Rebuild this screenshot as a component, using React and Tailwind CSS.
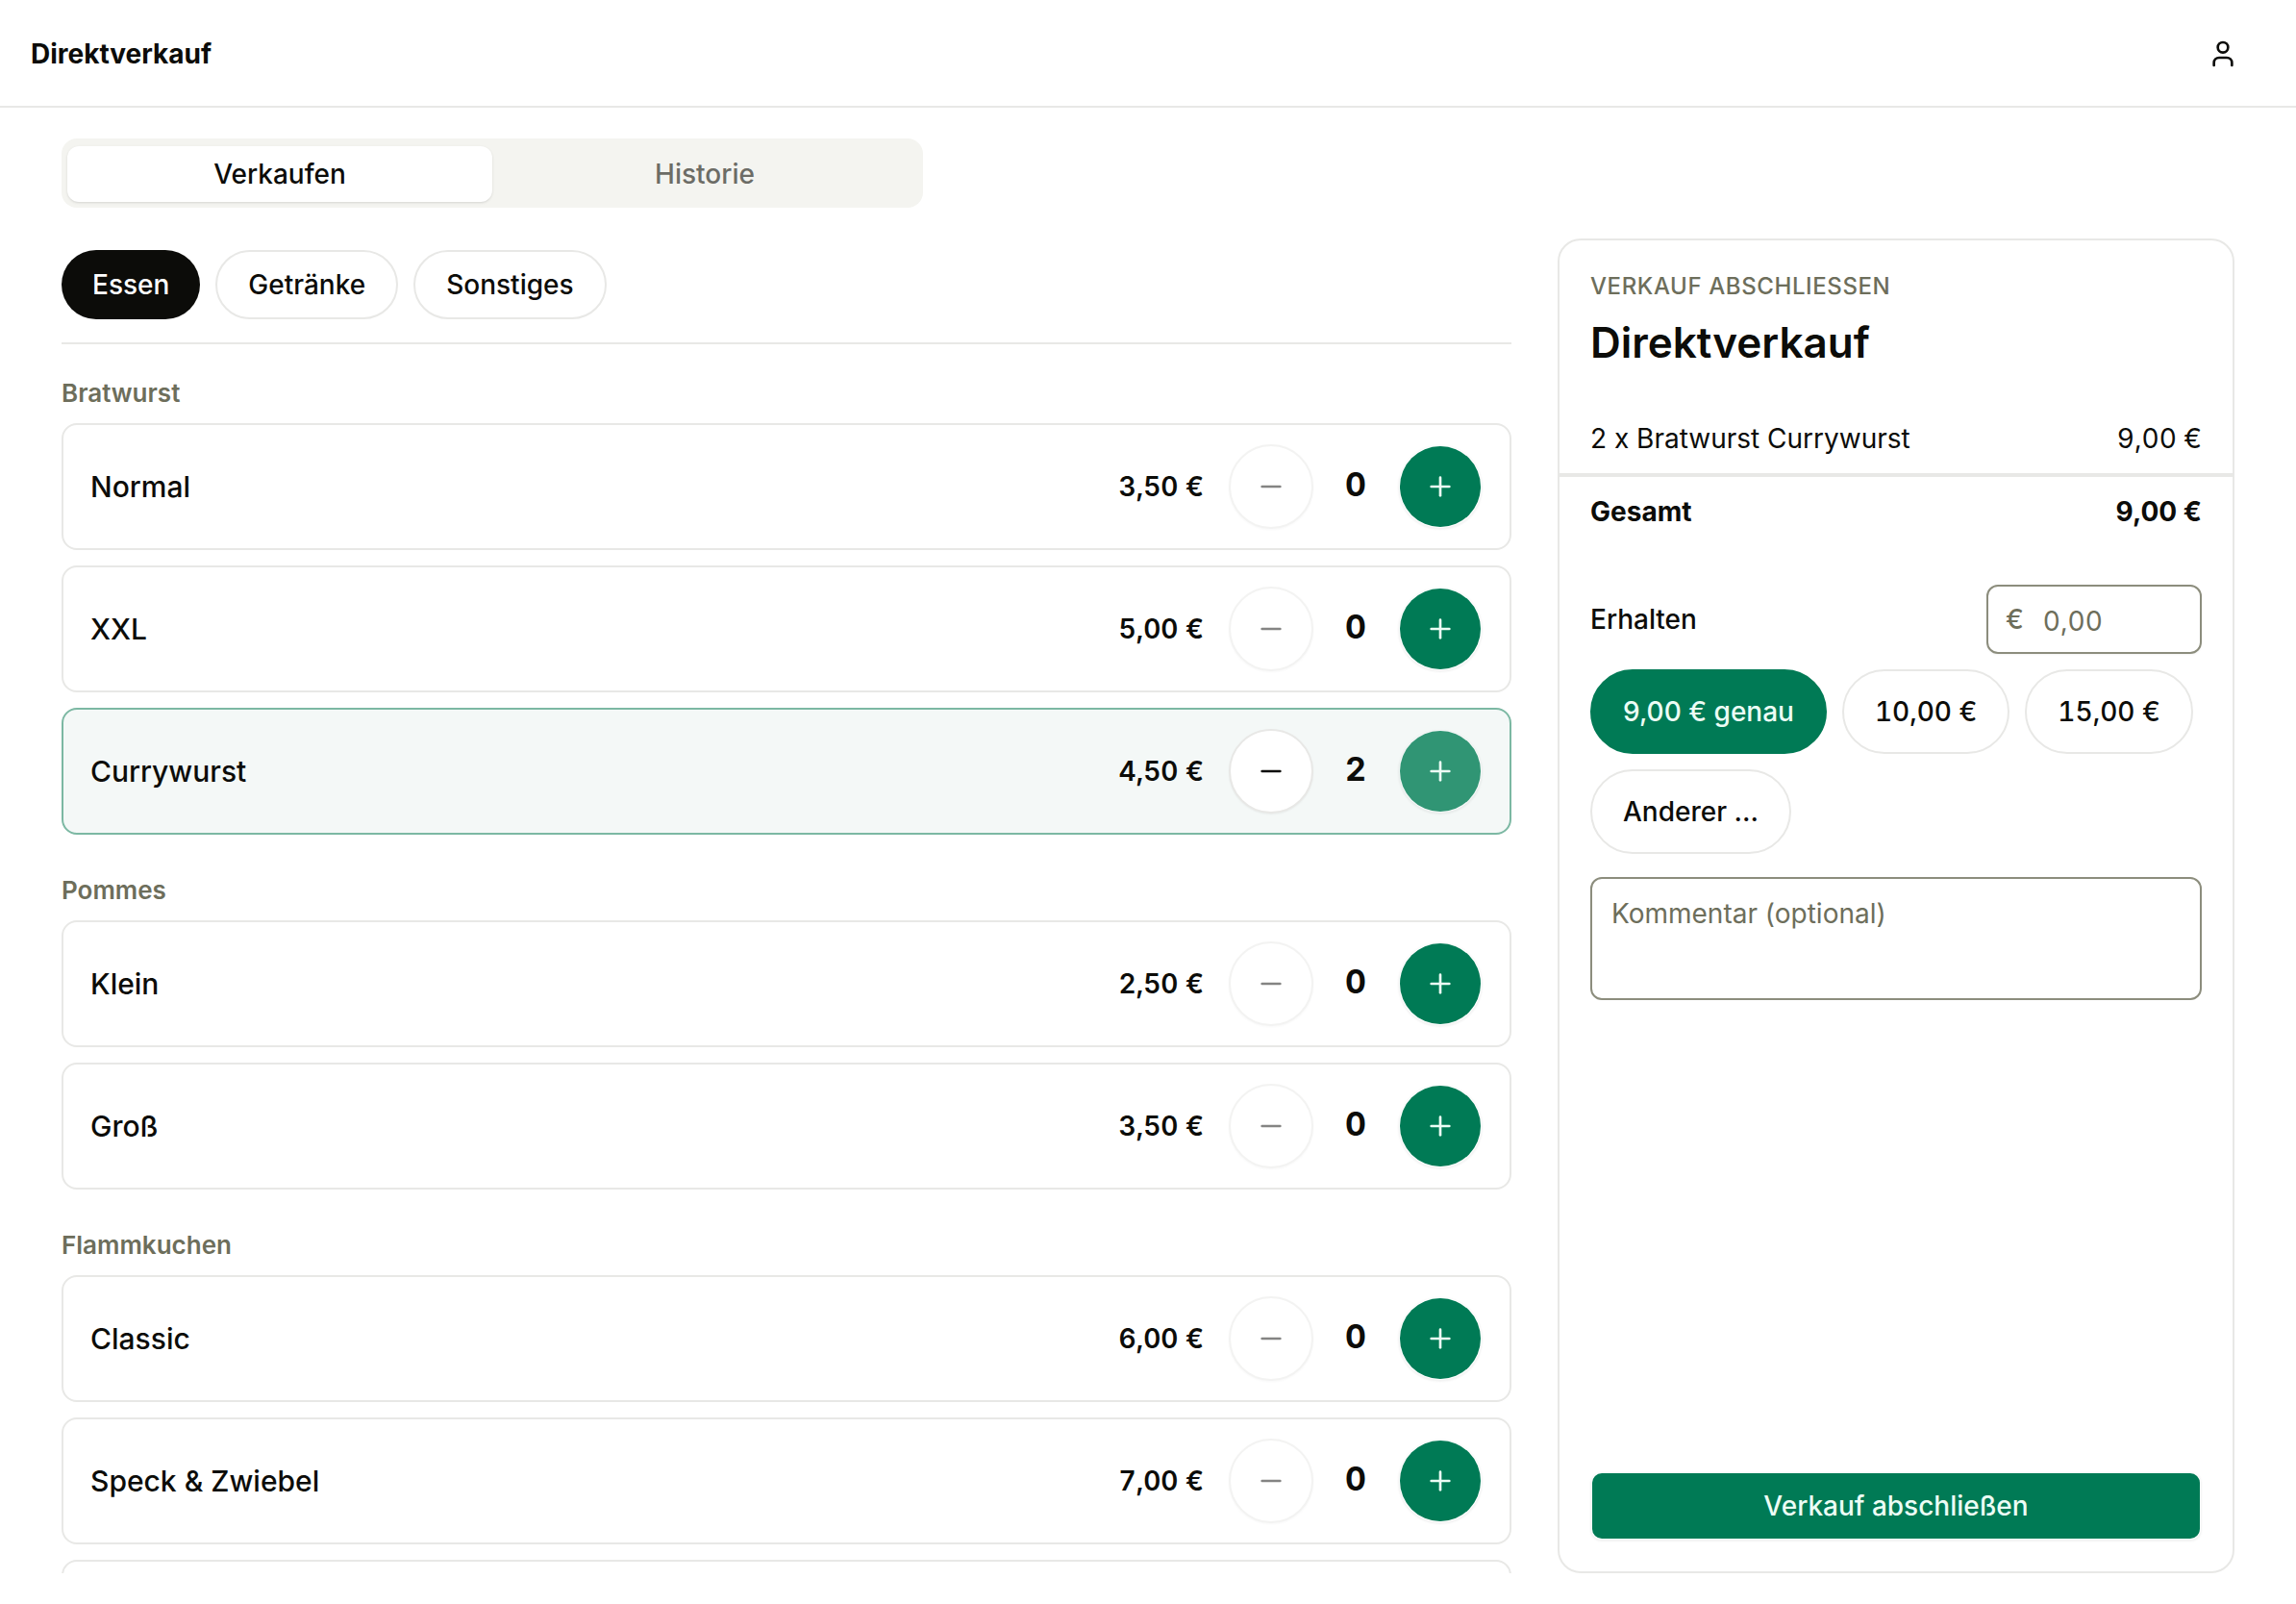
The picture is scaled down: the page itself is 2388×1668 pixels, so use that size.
import { Minus, Plus, User } from "lucide-react";

const groups = [
  {
    name: "Bratwurst",
    items: [
      { name: "Normal", price: "3,50 €", count: 0 },
      { name: "XXL", price: "5,00 €", count: 0 },
      { name: "Currywurst", price: "4,50 €", count: 2 },
    ],
  },
  {
    name: "Pommes",
    items: [
      { name: "Klein", price: "2,50 €", count: 0 },
      { name: "Groß", price: "3,50 €", count: 0 },
    ],
  },
  {
    name: "Flammkuchen",
    hasMore: true,
    items: [
      { name: "Classic", price: "6,00 €", count: 0 },
      { name: "Speck & Zwiebel", price: "7,00 €", count: 0 },
    ],
  },
];

const amounts = ["10,00 €", "15,00 €", "Anderer …"];

function ItemRow({ item }) {
  const active = item.count > 0;
  return (
    <li
      className={`flex shrink-0 items-center rounded-2xl border-2 px-7 py-5 ${
        active ? "border-[#7cb8a3] bg-[#f4f8f7]" : "border-[#e8e8e6] bg-white"
      }`}
    >
      <span className="flex-1 text-[30px] leading-10 font-medium">{item.name}</span>
      <span className="mr-[26px] text-[28px] leading-10 font-semibold tabular-nums">{item.price}</span>
      <div className="flex items-center gap-4">
        <button
          type="button"
          aria-label={`${item.name} entfernen`}
          disabled={!active}
          className="flex size-[88px] items-center justify-center rounded-full border-2 border-[#e8e8e6] bg-white shadow-xs disabled:opacity-50"
        >
          <Minus className="size-8" strokeWidth={2} />
        </button>
        <output className="w-14 pb-1 text-center text-[34px] leading-10 font-bold tabular-nums">{item.count}</output>
        <button
          type="button"
          aria-label={`${item.name} hinzufügen`}
          className={`flex size-[88px] items-center justify-center rounded-full border-2 border-transparent bg-clip-padding text-[#ecfdf5] shadow-xs ${
            active ? "bg-[#309574]" : "bg-[#007a55]"
          }`}
        >
          <Plus className="size-8" strokeWidth={2} />
        </button>
      </div>
    </li>
  );
}

export default function App() {
  return (
    <div className="flex h-screen flex-col bg-white font-['Inter',sans-serif] text-[28px] leading-10 text-[#0c0c09]">
      <header className="flex h-28 shrink-0 items-center justify-between border-b-2 border-[#e8e8e6] px-8 pt-0.5">
        <h1 className="font-bold">Direktverkauf</h1>
        <button type="button" aria-label="Benutzerkonto" className="mr-3 flex size-16 items-center justify-center">
          <User className="size-8" strokeWidth={2} />
        </button>
      </header>

      <main className="flex min-h-0 flex-1 flex-col px-16 py-8">
        <div role="tablist" className="grid h-[72px] w-[896px] shrink-0 grid-cols-2 rounded-2xl bg-[#f4f4f0] px-1.5 pt-2 pb-1.5 font-medium">
          <button type="button" role="tab" aria-selected="true" className="rounded-xl bg-white shadow-sm">
            Verkaufen
          </button>
          <button type="button" role="tab" aria-selected="false" className="text-[#6c6c66]">
            Historie
          </button>
        </div>

        <div className="mt-8 flex min-h-0 flex-1 gap-12">
          <section className="flex min-w-0 flex-1 flex-col overflow-hidden">
            <nav aria-label="Kategorien" className="flex shrink-0 gap-4 border-b-2 border-[#e8e8e6] pt-3 pb-6 font-medium">
              <button type="button" className="h-[72px] rounded-full bg-[#0c0c09] px-8 text-white">
                Essen
              </button>
              <button type="button" className="h-[72px] rounded-full border-2 border-[#e8e8e6] px-8">
                Getränke
              </button>
              <button type="button" className="h-[72px] rounded-full border-2 border-[#e8e8e6] px-8">
                Sonstiges
              </button>
            </nav>
            <div className="mt-8 flex min-h-0 flex-1 flex-col gap-[39px] overflow-hidden">
              {groups.map((group) => (
                <div key={group.name} className="flex shrink-0 flex-col">
                  <h2 className="mb-3 text-[26px] leading-[38px] font-semibold text-[#6d6e5b]">{group.name}</h2>
                  <ul className="flex flex-col gap-4">
                    {group.items.map((item) => (
                      <ItemRow key={item.name} item={item} />
                    ))}
                    {group.hasMore && (
                      <li aria-hidden="true" className="h-[132px] rounded-2xl border-2 border-[#e8e8e6]" />
                    )}
                  </ul>
                </div>
              ))}
            </div>
          </section>

          <aside className="flex w-[704px] shrink-0 flex-col rounded-3xl border-2 border-[#e8e8e6] pt-7 pb-8">
            <div className="px-8">
              <p className="text-2xl leading-10 font-medium tracking-wide text-[#6d6e5b] uppercase">Verkauf abschliessen</p>
              <h2 className="mt-2.5 text-[44px] leading-14 font-semibold">Direktverkauf</h2>
            </div>

            <div className="mt-13 flex justify-between px-8 pb-4">
              <span>2 x Bratwurst Currywurst</span>
              <span className="tabular-nums">9,00 €</span>
            </div>
            <div className="flex justify-between border-t-4 border-[#e8e8e6] px-8 pt-4 font-bold">
              <span>Gesamt</span>
              <span>9,00 €</span>
            </div>

            <form className="mt-14 flex flex-1 flex-col px-8">
              <div className="flex items-center justify-between">
                <label htmlFor="received" className="font-medium">
                  Erhalten
                </label>
                <div className="flex h-[72px] w-56 items-center rounded-xl border-2 border-[#8c8d7d] pl-[18px] text-[#6d6e5b] shadow-xs">
                  <span className="font-medium">€</span>
                  <input
                    id="received"
                    type="text"
                    placeholder="0,00"
                    className="w-full min-w-0 bg-transparent pt-1 pl-5 tabular-nums outline-none placeholder:text-[#6d6e5b]"
                  />
                </div>
              </div>

              <div className="mt-4 flex flex-wrap gap-4 font-medium">
                <button type="button" className="h-[88px] rounded-full border-2 border-[#007a55] bg-[#007a55] px-8 text-[#ecfdf5]">
                  9,00 € genau
                </button>
                {amounts.map((amount) => (
                  <button key={amount} type="button" className="h-[88px] rounded-full border-2 border-[#e8e8e6] px-8 tabular-nums">
                    {amount}
                  </button>
                ))}
              </div>

              <textarea
                aria-label="Kommentar"
                placeholder="Kommentar (optional)"
                className="mt-6 h-32 w-full resize-none rounded-xl border-2 border-[#8c8d7d] px-5 py-4 outline-none placeholder:text-[#6d6e5b]"
              />

              <button
                type="submit"
                className="mt-auto h-[72px] w-full rounded-xl border-2 border-transparent bg-[#007a55] bg-clip-padding font-medium text-[#ecfdf5] shadow-xs"
              >
                Verkauf abschließen
              </button>
            </form>
          </aside>
        </div>
      </main>
    </div>
  );
}
